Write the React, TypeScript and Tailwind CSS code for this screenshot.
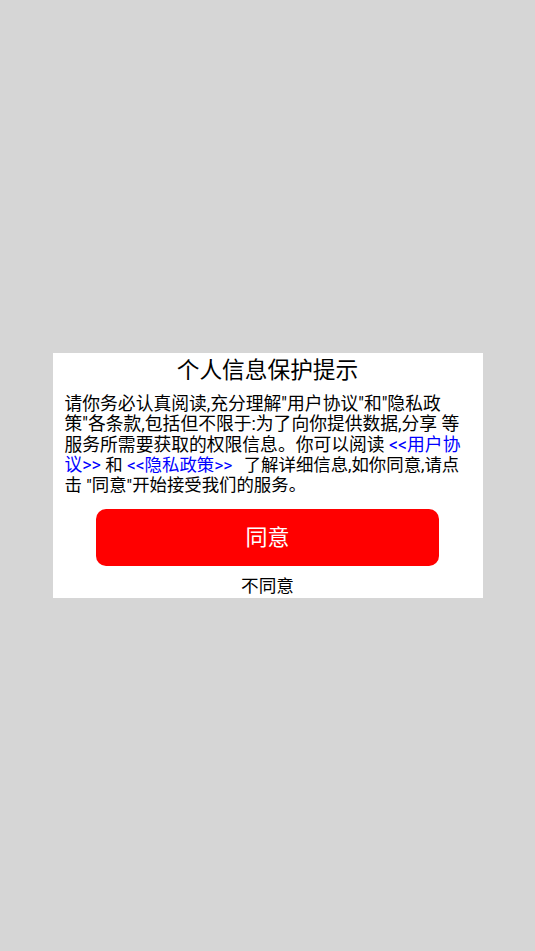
export default function App() {
  return (
    <div
      className="flex min-h-screen w-full items-center justify-center bg-[#d6d6d6]"
      style={{ fontFamily: 'Roboto, "Noto Sans CJK SC", "Noto Sans", sans-serif' }}
    >
      <div className="flex h-[245px] w-[430px] flex-col overflow-hidden bg-white">
        {/* Title */}
        <h2 className="mt-[4px] text-center text-[22.7px] leading-[28px] text-black">
          个人信息保护提示
        </h2>

        {/* Body */}
        <p className="mt-[9px] pl-3 pr-[22px] text-[17.8px] leading-[20.25px] text-black">
          请你务必认真阅读,充分理解"用户协议"和"隐私政策"各条款,包括但不限于:为了向你提供数据,分享 等服务所需要获取的权限信息。你可以阅读{' '}
          <span className="text-[#0000ff]">&lt;&lt;用户协议&gt;&gt;</span>
          <span className="text-[17.4px]">
            {' '}和 <span className="text-[#0000ff]">&lt;&lt;隐私政策&gt;&gt;</span>{' '}
            <span className="ml-[7px]">了解详细信息,如你同意,请点击 "同意"开始接受我们的服务。</span>
          </span>
        </p>

        {/* Buttons */}
        <button className="mx-auto mt-[14px] h-[57px] w-[343px] shrink-0 rounded-[10px] bg-[#ff0000] text-[22px] text-white">
          同意
        </button>
        <button className="mx-auto mt-[8px] text-[17.6px] leading-[24px] text-black">
          不同意
        </button>
      </div>
    </div>
  )
}
